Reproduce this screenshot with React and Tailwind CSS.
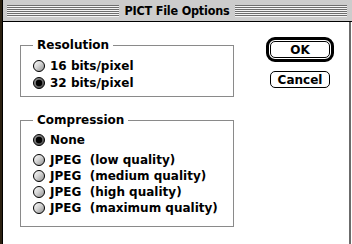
import React from 'react';

const font = { fontFamily: '"DejaVu Sans", "Liberation Sans", sans-serif' };

const Radio = ({ on }) => (
  <svg width="12" height="12" viewBox="0 0 12 12" className="shrink-0">
    <defs>
      <linearGradient id="rOff" x1="0" y1="0" x2="1" y2="1">
        <stop offset="0" stopColor="#ffffff" />
        <stop offset="0.45" stopColor="#d6d6d6" />
        <stop offset="1" stopColor="#8a8a8a" />
      </linearGradient>
      <linearGradient id="rOn" x1="0" y1="0" x2="1" y2="1">
        <stop offset="0" stopColor="#9a9a9a" />
        <stop offset="1" stopColor="#444444" />
      </linearGradient>
    </defs>
    <circle cx="6" cy="6" r="5.5" fill={on ? 'url(#rOn)' : 'url(#rOff)'} stroke="#000" strokeWidth="1" />
    {on && <circle cx="6" cy="6" r="3.2" fill="#000" />}
  </svg>
);

const Option = ({ on, label, h }) => (
  <div className={`flex items-center gap-[5px] pl-[12px] ${h}`}>
    <Radio on={on} />
    <span className="whitespace-pre text-[12px] font-bold leading-none text-black">{label}</span>
  </div>
);

const Group = ({ title, className, children }) => (
  <div className={`relative w-[214px] border border-[#8a8a8a] ${className}`}>
    <span className="absolute left-[12px] top-[-9px] bg-white px-[4px] text-[12px] font-bold leading-[16px] text-black">
      {title}
    </span>
    {children}
  </div>
);

const Stripes = () => (
  <div className="flex flex-1 flex-col">
    {[0, 1, 2, 3, 4, 5].map(i => (
      <div key={i}>
        <div className="h-px bg-[#6e6e6e]" />
        <div className="h-px bg-[#f4f4f4]" />
      </div>
    ))}
  </div>
);

export default function App() {
  return (
    <div className="flex h-[244px] w-[352px] overflow-hidden bg-white" style={font}>
      <div className="w-[2px] bg-[#2b2110]" />
      <div className="flex flex-1 flex-col border-l border-black">
        <div className="flex h-[22px] items-center gap-[5px] border-b border-black bg-[#cccccc] pl-[4px] pr-[5px] pt-[1px]">
          <Stripes />
          <span className="text-[12.5px] font-bold leading-none tracking-[-0.2px] text-black" style={{ fontFamily: '"DejaVu Sans Condensed", "DejaVu Sans", sans-serif' }}>
            PICT File Options
          </span>
          <Stripes />
        </div>
        <div className="mr-px flex flex-1 border-r-2 border-[#6b6b6b]">
          <div className="flex flex-col gap-[23px] pl-[17px] pt-[23px]">
            <Group title="Resolution" className="h-[52px] pt-[11px]">
              <Option label="16 bits/pixel" h="h-[17px]" />
              <Option on label="32 bits/pixel" h="h-[17px]" />
            </Group>
            <Group title="Compression" className="h-[107px] pt-[11px]">
              <Option on label="None" h="h-[16px] mb-[4px]" />
              <Option label="JPEG  (low quality)" h="h-[16px]" />
              <Option label="JPEG  (medium quality)" h="h-[16px]" />
              <Option label="JPEG  (high quality)" h="h-[16px]" />
              <Option label="JPEG  (maximum quality)" h="h-[16px]" />
            </Group>
          </div>
          <div className="ml-[32px] flex w-[68px] flex-col items-center pt-[15px]">
            <div className="rounded-[9px] border-[3px] border-black p-px">
              <button className="flex h-[17px] w-[60px] items-center justify-center rounded-[5px] border border-black bg-white text-[12px] font-bold leading-none text-black">
                OK
              </button>
            </div>
            <button className="mt-[9px] flex h-[17px] w-[60px] items-center justify-center rounded-[5px] border border-black bg-white text-[12px] font-bold leading-none text-black">
              Cancel
            </button>
          </div>
        </div>
      </div>
    </div>
  );
}
